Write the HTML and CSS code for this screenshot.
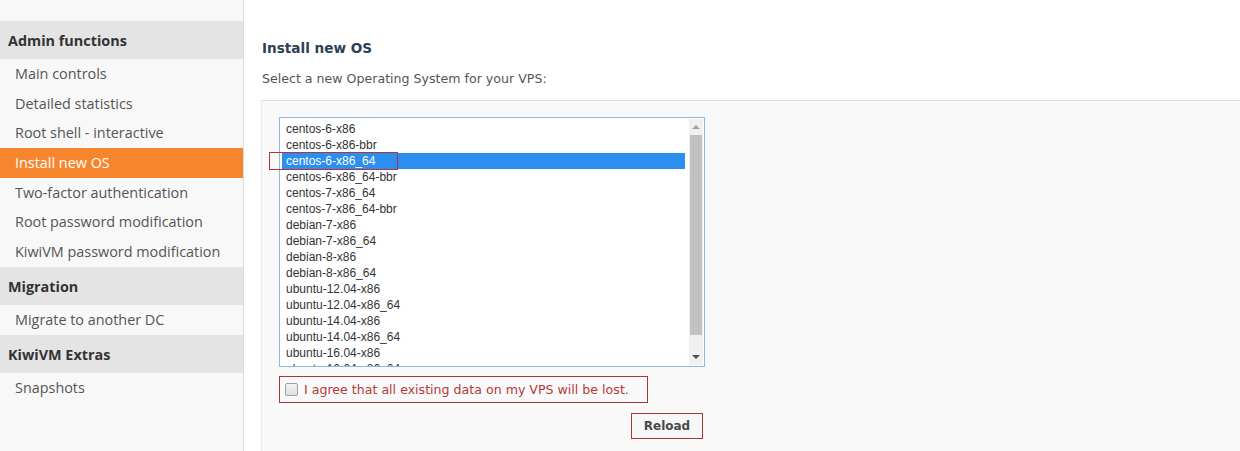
FILE: index.html
```html
<!DOCTYPE html>
<html>
<head>
<meta charset="utf-8">
<link rel="stylesheet" href="styles.css">
</head>
<body>
<div class="page">
  <aside class="sidebar">
    <div class="sb-top"></div>
    <div class="sb-head">Admin functions</div>
    <div class="sb-item">Main controls</div>
    <div class="sb-item">Detailed statistics</div>
    <div class="sb-item">Root shell - interactive</div>
    <div class="sb-item active">Install new OS</div>
    <div class="sb-item">Two-factor authentication</div>
    <div class="sb-item">Root password modification</div>
    <div class="sb-item">KiwiVM password modification</div>
    <div class="sb-head">Migration</div>
    <div class="sb-item">Migrate to another DC</div>
    <div class="sb-head">KiwiVM Extras</div>
    <div class="sb-item">Snapshots</div>
  </aside>
  <main class="main">
    <h2 class="title">Install new OS</h2>
    <p class="lead">Select a new Operating System for your VPS:</p>
    <div class="panel">
      <div class="listwrap">
        <div class="listbox">
          <div class="options">
            <div class="opt">centos-6-x86</div>
            <div class="opt">centos-6-x86-bbr</div>
            <div class="opt sel">centos-6-x86_64</div>
            <div class="opt">centos-6-x86_64-bbr</div>
            <div class="opt">centos-7-x86_64</div>
            <div class="opt">centos-7-x86_64-bbr</div>
            <div class="opt">debian-7-x86</div>
            <div class="opt">debian-7-x86_64</div>
            <div class="opt">debian-8-x86</div>
            <div class="opt">debian-8-x86_64</div>
            <div class="opt">ubuntu-12.04-x86</div>
            <div class="opt">ubuntu-12.04-x86_64</div>
            <div class="opt">ubuntu-14.04-x86</div>
            <div class="opt">ubuntu-14.04-x86_64</div>
            <div class="opt">ubuntu-16.04-x86</div>
            <div class="opt">ubuntu-16.04-x86_64</div>
          </div>
          <div class="scrollbar">
            <div class="arrow up"></div>
            <div class="track"><div class="thumb"></div></div>
            <div class="arrow down"></div>
          </div>
        </div>
        <div class="mark"></div>
      </div>
      <label class="agree"><span class="cb"></span><span class="agree-text">I agree that all existing data on my VPS will be lost.</span></label>
      <div class="actions"><button class="btn">Reload</button></div>
    </div>
  </main>
</div>
</body>
</html>
```

FILE: styles.css
```css
html, body {
  margin: 0;
  padding: 0;
  background: #ffffff;
}
.page {
  display: flex;
  width: 1240px;
  height: 451px;
  overflow: hidden;
}
.sidebar {
  width: 243px;
  flex: none;
  background: #f8f8f8;
  border-right: 1px solid #dcdcdc;
  font-family: "Open Sans", sans-serif;
  font-size: 14.4px;
  color: #555;
}
.sb-top {
  height: 21px;
}
.sb-head {
  box-sizing: border-box;
  height: 38px;
  line-height: 36px;
  padding-top: 2px;
  background: #e4e4e4;
  padding-left: 8px;
  font-weight: 700;
  font-size: 14.4px;
  color: #333;
}
.sb-item {
  box-sizing: border-box;
  height: 29.7px;
  line-height: 28.7px;
  padding-top: 1px;
  padding-left: 15px;
  color: #555;
}
.sb-item.active {
  background: #f7852d;
  color: #fff;
}
.main {
  flex: 1;
  padding: 39px 0 0 17px;
  font-family: "DejaVu Sans", Verdana, sans-serif;
}
.title {
  margin: 0 0 0 1px;
  font-size: 13.6px;
  line-height: 18px;
  font-weight: 700;
  color: #2e4053;
}
.lead {
  margin: 13px 0 0 1px;
  font-size: 12.6px;
  line-height: 18px;
  color: #555;
}
.panel {
  margin-top: 12px;
  background: #f9f9f9;
  border-top: 1px solid #dedede;
  border-left: 1px solid #ececec;
  padding: 16px 0 12px 17px;
  height: 400px;
}
.listwrap {
  position: relative;
  width: 426px;
}
.listbox {
  box-sizing: border-box;
  width: 426px;
  height: 250px;
  border: 1px solid #8fb7e0;
  background: #fff;
  display: flex;
  overflow: hidden;
}
.options {
  flex: 1;
  padding: 3px 4px 0 2px;
  font-family: "Liberation Sans", Arial, sans-serif;
  font-size: 12px;
  color: #333;
}
.opt {
  height: 16px;
  line-height: 16px;
  padding-left: 4px;
}
.opt.sel {
  background: #2b8ff0;
  color: #fff;
}
.scrollbar {
  width: 14px;
  margin: 1px 1px 1px 0;
  display: flex;
  flex-direction: column;
  background: #f0f0f0;
}
.arrow {
  height: 16px;
  display: flex;
  align-items: center;
  justify-content: center;
}
.arrow::before {
  content: "";
  width: 0;
  height: 0;
  border-left: 4px solid transparent;
  border-right: 4px solid transparent;
}
.arrow.up::before {
  border-bottom: 4px solid #a3a3a3;
}
.arrow.down::before {
  border-top: 4px solid #505050;
}
.track {
  flex: 1;
  padding: 0 1px;
}
.thumb {
  height: 200px;
  background: #c1c1c1;
}
.mark {
  position: absolute;
  left: -10px;
  top: 35px;
  width: 127px;
  height: 16px;
  border: 1px solid #b5343a;
}
.agree {
  margin-top: 9px;
  box-sizing: border-box;
  width: 369px;
  height: 27px;
  border: 1px solid #a9353a;
  display: flex;
  align-items: center;
  padding-left: 5px;
  font-size: 12.6px;
  color: #b63a3a;
}
.cb {
  width: 11px;
  height: 11px;
  border: 1px solid #a0a0a0;
  border-radius: 2px;
  background: linear-gradient(#f4f4f4, #dedede);
  margin-right: 6px;
  flex: none;
}
.agree-text {
  line-height: 16px;
  white-space: nowrap;
}
.actions {
  width: 424px;
  display: flex;
  justify-content: flex-end;
  margin-top: 10px;
}
.btn {
  box-sizing: border-box;
  width: 72px;
  height: 26px;
  border: 1px solid #a9353a;
  background: #f7f7f7;
  font-family: "DejaVu Sans", Verdana, sans-serif;
  font-size: 12px;
  font-weight: 700;
  color: #4a4a4a;
  padding: 0;
  border-radius: 0;
}
```
